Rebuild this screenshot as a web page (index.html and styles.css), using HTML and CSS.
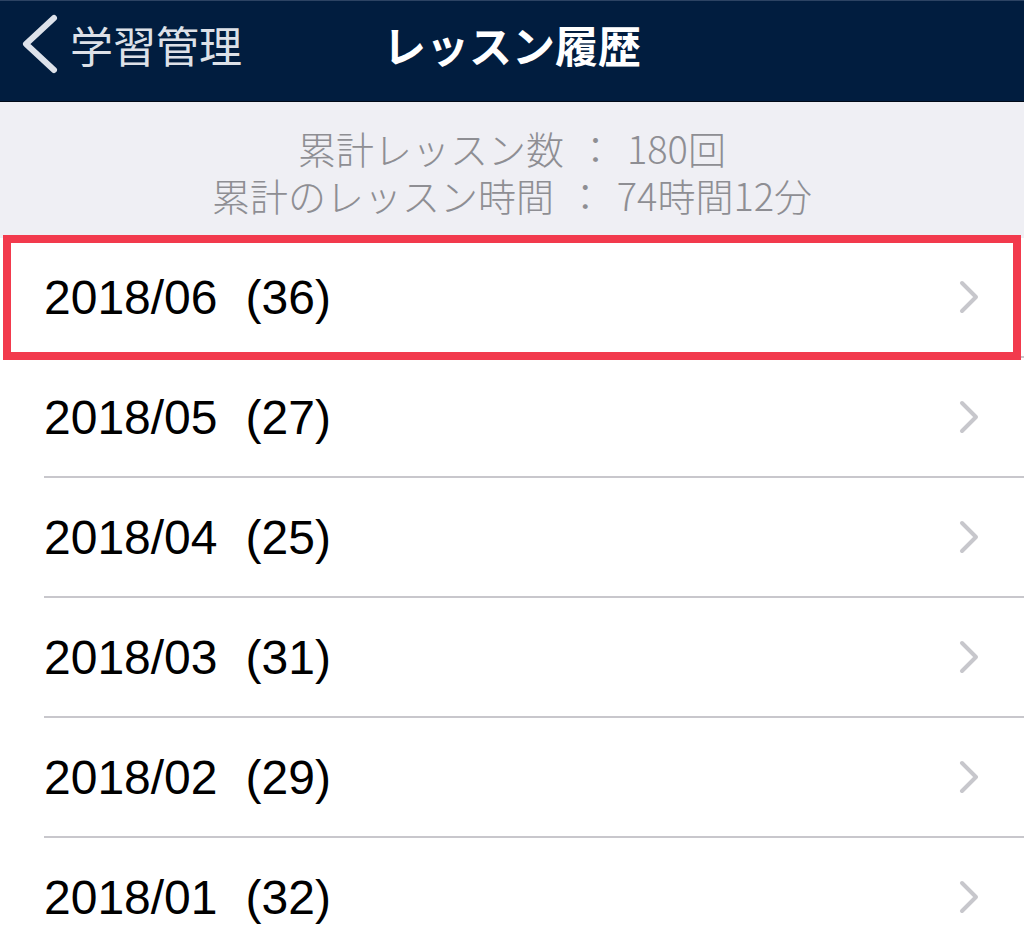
FILE: index.html
```html
<!DOCTYPE html>
<html lang="ja">
<head>
<meta charset="utf-8">
<title>レッスン履歴</title>
<link rel="stylesheet" href="styles.css">
</head>
<body>
<header class="navbar">
  <div class="back">
    <svg class="back-icon" width="40" height="62" viewBox="0 0 40 62"><path d="M34 5 L6 31 L34 57" fill="none" stroke="#dde2ea" stroke-width="6" stroke-linecap="round" stroke-linejoin="round"/></svg>
    <span class="back-label">学習管理</span>
  </div>
  <h1 class="title">レッスン履歴</h1>
  <div class="spacer"></div>
</header>
<section class="summary">
  <p class="summary-line">累計レッスン数 ： 180回</p>
  <p class="summary-line">累計のレッスン時間 ： 74時間12分</p>
</section>
<ul class="list">
  <li class="row highlighted"><div class="row-inner"><span class="date">2018/06</span><span class="count">(36)</span><svg class="chev" width="26" height="36" viewBox="0 0 26 36"><path d="M6 4 L20 18 L6 32" fill="none" stroke="#c7c7cc" stroke-width="4" stroke-linecap="round" stroke-linejoin="round"/></svg></div><div class="highlight-box"></div></li>
  <li class="row"><div class="row-inner"><span class="date">2018/05</span><span class="count">(27)</span><svg class="chev" width="26" height="36" viewBox="0 0 26 36"><path d="M6 4 L20 18 L6 32" fill="none" stroke="#c7c7cc" stroke-width="4" stroke-linecap="round" stroke-linejoin="round"/></svg></div></li>
  <li class="row"><div class="row-inner"><span class="date">2018/04</span><span class="count">(25)</span><svg class="chev" width="26" height="36" viewBox="0 0 26 36"><path d="M6 4 L20 18 L6 32" fill="none" stroke="#c7c7cc" stroke-width="4" stroke-linecap="round" stroke-linejoin="round"/></svg></div></li>
  <li class="row"><div class="row-inner"><span class="date">2018/03</span><span class="count">(31)</span><svg class="chev" width="26" height="36" viewBox="0 0 26 36"><path d="M6 4 L20 18 L6 32" fill="none" stroke="#c7c7cc" stroke-width="4" stroke-linecap="round" stroke-linejoin="round"/></svg></div></li>
  <li class="row"><div class="row-inner"><span class="date">2018/02</span><span class="count">(29)</span><svg class="chev" width="26" height="36" viewBox="0 0 26 36"><path d="M6 4 L20 18 L6 32" fill="none" stroke="#c7c7cc" stroke-width="4" stroke-linecap="round" stroke-linejoin="round"/></svg></div></li>
  <li class="row"><div class="row-inner"><span class="date">2018/01</span><span class="count">(32)</span><svg class="chev" width="26" height="36" viewBox="0 0 26 36"><path d="M6 4 L20 18 L6 32" fill="none" stroke="#c7c7cc" stroke-width="4" stroke-linecap="round" stroke-linejoin="round"/></svg></div></li>
</ul>
</body>
</html>
```
FILE: styles.css
```css
* { box-sizing: border-box; }
html, body { margin: 0; padding: 0; }
body {
  width: 1024px;
  height: 952px;
  overflow: hidden;
  background: #ffffff;
  font-family: "Noto Sans CJK JP", "Liberation Sans", sans-serif;
}
.navbar {
  height: 102px;
  background: #011d3f;
  border-top: 1px solid #2c4363;
  border-bottom: 1px solid #000a18;
  display: grid;
  grid-template-columns: 1fr auto 1fr;
  align-items: center;
}
.back {
  display: flex;
  align-items: center;
  padding-left: 20px;
  margin-top: -14px;
}
.back-icon { display: block; flex: none; }
.back-label {
  margin-left: 10px;
  font-size: 43px;
  line-height: 1;
  color: #dde1e8;
}
.title {
  margin: -14px 0 0 0;
  font-size: 43px;
  line-height: 1;
  font-weight: 700;
  color: #ffffff;
}
.summary {
  height: 136px;
  background: #efeff4;
  padding-top: 22px;
  text-align: center;
}
.summary-line {
  margin: 0;
  font-size: 38px;
  font-weight: 300;
  line-height: 47px;
  color: #8e8e93;
  word-spacing: 4px;
}
.list {
  list-style: none;
  margin: 0;
  padding: 0;
}
.row {
  position: relative;
  height: 120px;
}
.row-inner {
  height: 120px;
  margin-left: 44px;
  padding-right: 42px;
  display: flex;
  align-items: center;
  border-bottom: 2px solid #c8c7cc;
  font-family: "Liberation Sans", Arial, sans-serif;
  font-size: 48px;
  color: #000000;
}
.count { margin-left: 28px; }
.chev { margin-left: auto; display: block; flex: none; }
.highlight-box {
  position: absolute;
  left: 3px;
  right: 3px;
  top: -3px;
  bottom: -2px;
  border: 8px solid #f23a4d;
  pointer-events: none;
}
```
